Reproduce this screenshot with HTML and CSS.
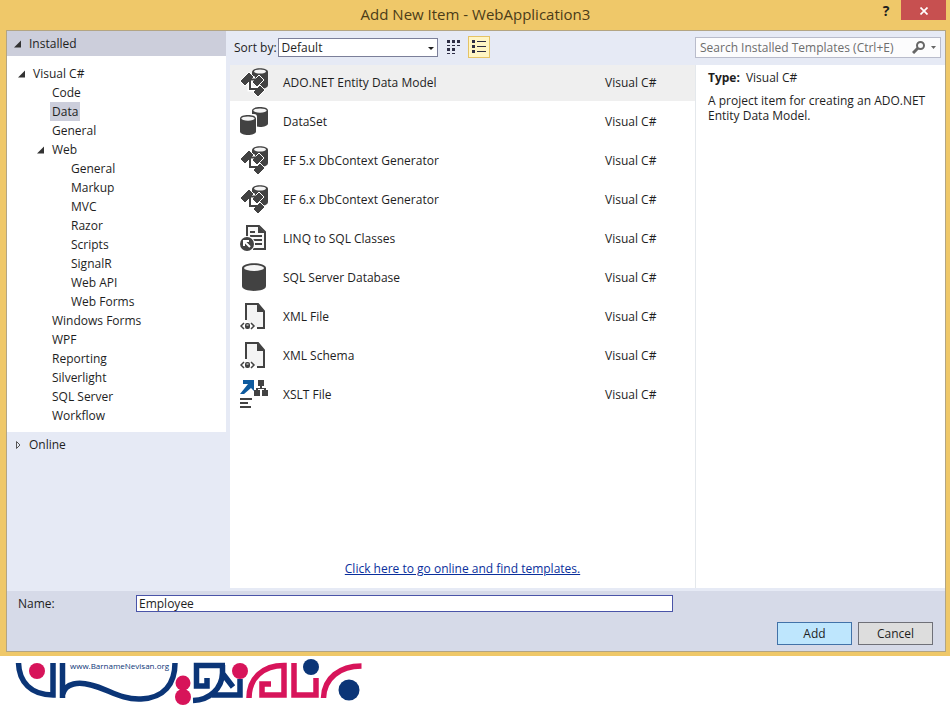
FILE: index.html
```html
<!DOCTYPE html>
<html lang="en">
<head>
<meta charset="utf-8">
<title>Add New Item - WebApplication3</title>
<link rel="stylesheet" href="styles.css">
</head>
<body>
<svg class="sprite" aria-hidden="true">
  <symbol id="cylinder" viewBox="0 0 24 28" preserveAspectRatio="none"><path d="M0 5C0-1.500 24-1.500 24 5V23C24 29.500 0 29.500 0 23Z" fill="#424242"/><ellipse cx="12" cy="5" rx="10" ry="3" fill="#f4f4f4"/></symbol>
  <symbol id="model" viewBox="0 0 30 30">
    <path d="M12 5C12 0 28 0 28 5V18C28 21 23 22 20 22L12 10Z" fill="#424242"/><ellipse cx="20" cy="4.500" rx="6" ry="2" fill="#f4f4f4"/>
    <path d="M7 12H15M10 12V22H18" stroke="#fff" stroke-width="5" fill="none"/>
    <path d="M0 14L9 5L14 10L5 19ZM12 15L19 8L24 13L17 20ZM13 25L20 18L25 23L18 30Z" fill="#424242" stroke="#fff"/>
    <path d="M8 12.500H16M10 13V22H17" fill="none" stroke="#424242" stroke-width="2"/>
  </symbol>
  <symbol id="xml" viewBox="0 0 30 30">
    <path d="M6 19V3H18L24 10V27H17" fill="#f4f4f4" stroke="#424242" stroke-width="2"/><path d="M17 3V11H25Z" fill="#424242"/>
    <path d="M4 22L1 25L4 28M11 22L14 25L11 28" fill="none" stroke="#424242" stroke-width="1.500"/><rect x="5" y="22" width="5" height="6" rx="2" fill="#424242"/><path d="M6.500 24H8.500" stroke="#fff"/>
  </symbol>
</svg>
<main class="window">
  <header class="titlebar">
    <h1>Add New Item - WebApplication3</h1>
    <button class="help" aria-label="Help">?</button>
    <button class="close" aria-label="Close"><svg width="8" height="8" viewBox="0 0 8 8"><path d="M0.500 0.500L7.500 7.500M7.500 0.500L0.500 7.500" stroke="#fff" stroke-width="1.700"/></svg></button>
  </header>
  <div class="dialog">
    <div class="content">
      <nav class="sidebar" aria-label="Categories">
        <div class="group selected-group"><svg class="arrow" viewBox="0 0 7 7"><path d="M7 0V7H0Z"/></svg>Installed</div>
        <ul class="tree">
          <li class="l1"><svg class="arrow" viewBox="0 0 7 7"><path d="M7 0V7H0Z"/></svg>Visual C#</li>
          <li class="l2">Code</li>
          <li class="l2"><span class="current">Data</span></li>
          <li class="l2">General</li>
          <li class="l2 open"><svg class="arrow" viewBox="0 0 7 7"><path d="M7 0V7H0Z"/></svg>Web</li>
          <li class="l3">General</li>
          <li class="l3">Markup</li>
          <li class="l3">MVC</li>
          <li class="l3">Razor</li>
          <li class="l3">Scripts</li>
          <li class="l3">SignalR</li>
          <li class="l3">Web API</li>
          <li class="l3">Web Forms</li>
          <li class="l2">Windows Forms</li>
          <li class="l2">WPF</li>
          <li class="l2">Reporting</li>
          <li class="l2">Silverlight</li>
          <li class="l2">SQL Server</li>
          <li class="l2">Workflow</li>
        </ul>
        <div class="group"><svg class="arrow" viewBox="0 0 7 8"><path d="M2.500 0.500L6 4L2.500 7.500Z" class="hollow"/></svg>Online</div>
      </nav>
      <section class="browser">
        <div class="toolbar">
          <label for="sort">Sort by:</label>
          <span class="combo"><select id="sort"><option>Default</option></select><svg width="6" height="3" viewBox="0 0 6 3"><path d="M0 0H6L3 3Z" fill="#1e1e1e"/></svg></span>
          <button class="view" aria-label="Small icons"><svg width="14" height="14" viewBox="0 0 14 14" fill="#2d2d44"><path d="M0 0h3v3H0zM5 0h3v3H5zM10 0h3v3h-3zM0 5h3v1H0zM5 5h3v1H5zM10 5h3v1h-3zM0 8h3v3H0zM5 8h3v3H5zM0 13h3v1H0zM5 13h3v1H5z"/></svg></button>
          <button class="view active" aria-label="List"><svg width="14" height="14" viewBox="0 0 14 14" fill="#2d2d44"><path d="M0 0h3v3H0zM0 5h3v3H0zM0 10h3v3H0zM5 1h9v1H5zM5 6h9v1H5zM5 11h9v1H5z"/></svg></button>
        </div>
        <div class="list">
          <ul class="items">
            <li class="item picked"><svg class="icon"><use href="#model"/></svg><span>ADO.NET Entity Data Model</span><span class="lang">Visual C#</span></li>
            <li class="item"><svg class="icon" viewBox="0 0 30 30"><use href="#cylinder" x="12" y="1" width="16" height="20"/><rect x="0" y="8" width="17" height="21" rx="3" fill="#fff"/><use href="#cylinder" x="0" y="9" width="16" height="20"/></svg><span>DataSet</span><span class="lang">Visual C#</span></li>
            <li class="item"><svg class="icon"><use href="#model"/></svg><span>EF 5.x DbContext Generator</span><span class="lang">Visual C#</span></li>
            <li class="item"><svg class="icon"><use href="#model"/></svg><span>EF 6.x DbContext Generator</span><span class="lang">Visual C#</span></li>
            <li class="item"><svg class="icon" viewBox="0 0 30 30"><path d="M7 17V3H19L25 9V26H13" fill="#f8f8f8" stroke="#424242" stroke-width="2"/><path d="M18 3V10H25ZM10 8H15V10H10ZM10 12H22V14H10ZM13 16H22V18H13ZM15 20H22V22H15Z" fill="#424242"/><circle cx="7" cy="21" r="8" fill="#fff"/><circle cx="7" cy="21" r="7" fill="#424242"/><path d="M4 23V18H9M4 18L10 24" stroke="#fff" stroke-width="2" fill="none"/></svg><span>LINQ to SQL Classes</span><span class="lang">Visual C#</span></li>
            <li class="item"><svg class="icon" viewBox="0 0 30 30"><use href="#cylinder" x="2" y="1" width="24" height="28"/></svg><span>SQL Server Database</span><span class="lang">Visual C#</span></li>
            <li class="item"><svg class="icon"><use href="#xml"/></svg><span>XML File</span><span class="lang">Visual C#</span></li>
            <li class="item"><svg class="icon"><use href="#xml"/></svg><span>XML Schema</span><span class="lang">Visual C#</span></li>
            <li class="item"><svg class="icon" viewBox="0 0 30 30"><path d="M3 1H14V12L11 9L4 15H0L8 5H3Z" fill="#0e5a9e"/><path d="M18 1H24V7H18ZM14 11H20V17H14ZM22 11H28V17H22ZM20 7H22V9H26V12H24V10H18V12H16V9H20ZM0 19H12V21H0ZM0 23H8V25H0ZM0 27H11V29H0Z" fill="#424242"/></svg><span>XSLT File</span><span class="lang">Visual C#</span></li>
          </ul>
          <a class="online" href="#">Click here to go online and find templates.</a>
        </div>
      </section>
      <aside class="side">
        <div class="searchbar"><div class="search">
          <input type="search" aria-label="Search Installed Templates" placeholder="Search Installed Templates (Ctrl+E)">
          <svg width="13" height="13" viewBox="0 0 13 13"><circle cx="8.500" cy="4.500" r="3.500" fill="none" stroke="#666" stroke-width="2"/><path d="M6 7L1 12" stroke="#666" stroke-width="3"/></svg>
          <svg width="5" height="3" viewBox="0 0 5 3"><path d="M0 0H5L2.500 3Z" fill="#666"/></svg>
        </div></div>
        <div class="details">
          <p><strong>Type:</strong>Visual C#</p>
          <p>A project item for creating an ADO.NET Entity Data Model.</p>
        </div>
      </aside>
    </div>
    <form class="footer">
      <div class="field"><label for="name">Name:</label><input id="name" value="Employee"></div>
      <div class="actions"><button type="button" class="add">Add</button><button type="button">Cancel</button></div>
    </form>
  </div>
</main>
<footer class="brand">
  <svg width="370" height="50" viewBox="0 656 370 50" role="img" aria-label="BarnameNevisan">
    <g fill="none" stroke="#0b3577" stroke-width="5.500">
      <path d="M18.500 663C19 682 31 695 53 695V663M62.500 663V698M62.500 695C65 682 80 682 91 685C108 689 121 700 141 699C164 698 175 684 175 663"/>
      <path d="M225 665.500H196.500V686H207V678M222.500 665V673C222 688 210 700 193 700.500M223 674L233 687M212 695H240V679"/>
    </g>
    <g fill="none" stroke="#d7145a" stroke-width="5.500">
      <path d="M249 698C249 678 263 665.500 284 665.500V695H262V684H271M294 663V695H316V678M323.500 698C324 678 340 666 361.500 666"/>
    </g>
    <g fill="#d7145a"><circle cx="37" cy="671" r="8"/><circle cx="183" cy="683" r="7.500"/><circle cx="183" cy="697" r="8"/><circle cx="240" cy="671" r="8"/></g>
    <g fill="#0b3577"><circle cx="311" cy="667" r="8"/><circle cx="349" cy="690" r="10.500"/></g>
    <text x="70" y="669" class="site">www.BarnameNevisan.org</text>
  </svg>
</footer>
</body>
</html>
```
FILE: styles.css
```css
* { box-sizing: border-box; }
body { margin: 0; min-height: 100vh; display: flex; flex-direction: column; background: #fff; color: #1e1e1e; font: 12px/15px "Open Sans", "Noto Sans", sans-serif; }
button, input, select { font: inherit; color: inherit; }
ul, p, h1 { margin: 0; padding: 0; list-style: none; }
.sprite { display: none; }
.window { flex: 1; display: flex; flex-direction: column; padding: 0 4px 4px 6px; background: #efc869; }
.titlebar { height: 30px; display: grid; grid-template-columns: 1fr 30px 45px; align-items: start; padding-left: 74px; }
.titlebar h1 { font-size: 15px; line-height: 28px; font-weight: 400; text-align: center; color: #4b3c18; }
.titlebar button { border: 0; padding: 0; height: 20px; background: none; }
.titlebar .help { font-size: 14px; font-weight: 700; }
.titlebar .close { background: #c75050; }
.dialog { flex: 1; display: flex; flex-direction: column; border: 1px solid #b3a583; background: #e6eaf5; }
.content { flex: 1; display: grid; grid-template-columns: 219px 1fr 250px; padding-bottom: 3px; }
.group { height: 25px; display: flex; align-items: center; gap: 8px; padding-left: 7px; }
.selected-group { background: #cccedb; }
.arrow { width: 7px; height: 8px; fill: #333; flex: none; }
.hollow { fill: none; stroke: #555; }
.tree { padding: 8px 0 7px; background: #fff; }
.tree li { height: 19px; display: flex; align-items: center; }
.tree .l1 { padding-left: 11px; gap: 8px; }
.tree .l2 { padding-left: 45px; }
.tree .open { padding-left: 30px; gap: 8px; }
.tree .l3 { padding-left: 64px; }
.current { background: #cccedb; padding: 2px; margin-left: -2px; }
.browser { display: flex; flex-direction: column; padding-left: 4px; }
.toolbar { height: 34px; display: flex; align-items: center; padding: 0 0 2px 4px; }
.combo { position: relative; width: 160px; margin: 0 5px 0 1px; display: flex; }
.combo select { appearance: none; width: 100%; height: 19px; padding: 0 3px; border: 1px solid #7b7f99; border-radius: 0; background: #fff; }
.combo svg { position: absolute; right: 4px; top: 9px; pointer-events: none; }
.view { width: 22px; height: 22px; display: flex; align-items: center; justify-content: center; padding: 0; border: 1px solid transparent; background: none; margin-right: 3px; }
.view.active { background: #fff5c4; border-color: #e5c365; }
.list { flex: 1; display: flex; flex-direction: column; justify-content: space-between; background: #fff; }
.items { display: grid; gap: 3px; }
.item { height: 36px; display: grid; grid-template-columns: 30px 1fr 90px; column-gap: 13px; align-items: center; padding: 0 0 2px 10px; }
.item.picked { background: #efefef; }
.icon { width: 30px; height: 30px; }
.online { align-self: center; margin-bottom: 12px; color: #0a2f9c; }
.side { display: flex; flex-direction: column; }
.searchbar { height: 34px; display: flex; align-items: center; padding: 0 4px 2px 0; }
.search { flex: 1; height: 21px; display: flex; align-items: center; gap: 6px; padding: 0 4px; border: 1px solid #b9bccb; background: #fcfcfd; }
.search input { flex: 1; min-width: 0; padding: 0; border: 0; outline: 0; background: none; }
.search input::placeholder { color: #6d6d6d; opacity: 1; }
.details { flex: 1; padding: 5px 12px; border-left: 1px solid #e4e8ec; background: #fff; }
.details p { margin-bottom: 8px; }
.details strong { margin-right: 6px; }
.footer { height: 60px; display: flex; flex-direction: column; justify-content: space-between; padding: 4px 12px 6px 11px; background: #d6dae8; }
.field { display: flex; align-items: center; }
.field label { width: 118px; }
.field input { flex: 0 1 537px; height: 17px; padding: 0 2px; border: 1px solid #4a54a8; background: #fff; }
.actions { display: flex; justify-content: flex-end; gap: 6px; }
.actions button { width: 75px; height: 23px; padding: 0; border: 1px solid #6f7078; background: #dddddd; }
.actions .add { border-color: #4272a8; background: #bee6fd; }
.brand { height: 50px; }
.brand svg { display: block; }
.site { font: 8px "Open Sans", sans-serif; fill: #0b3577; }
```
